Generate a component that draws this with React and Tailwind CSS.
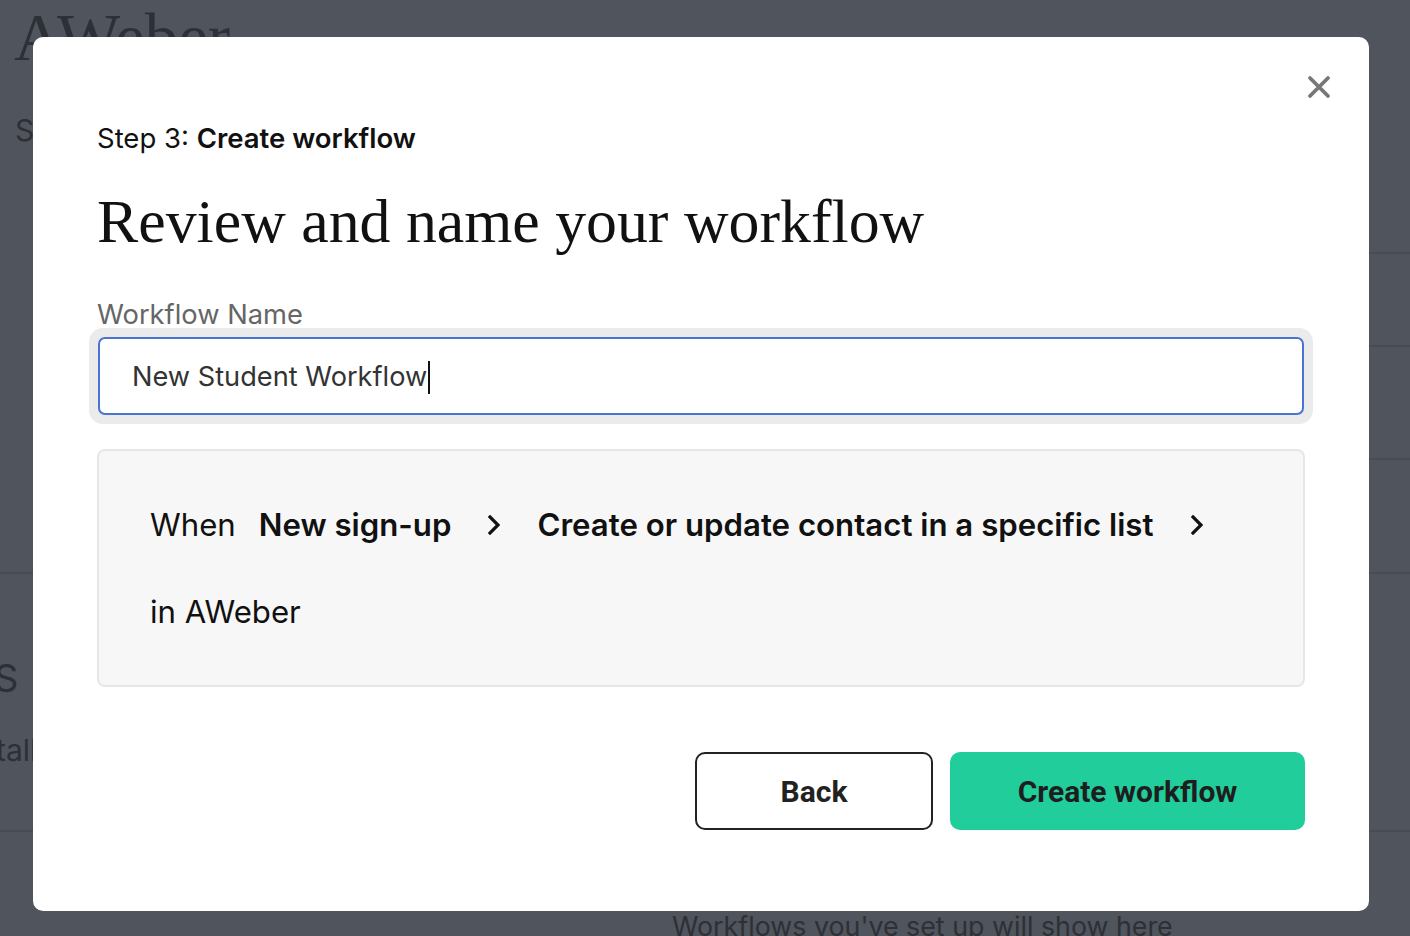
import React from "react";

function Chevron() {
  return (
    <svg width="12" height="20" viewBox="0 0 12 20" className="shrink-0" aria-hidden="true">
      <path d="M2 2 L10 10 L2 18" fill="none" stroke="#111" strokeWidth="3.2" strokeLinecap="square" strokeLinejoin="miter" />
    </svg>
  );
}

function CloseIcon() {
  return (
    <svg width="24" height="24" viewBox="0 0 24 24" aria-hidden="true">
      <path d="M3 3 L21 21 M21 3 L3 21" fill="none" stroke="#777" strokeWidth="3.8" strokeLinecap="round" />
    </svg>
  );
}

export default function App() {
  const sans = { fontFamily: "Inter, 'Noto Sans', sans-serif" };
  return (
    <div className="relative h-[936px] w-[1410px] overflow-hidden bg-[#50545c]" style={sans}>
      {/* Background page (dimmed) */}
      <div className="flex flex-col text-[#2d3036]">
        <div className="h-[100px] pl-[14px] pt-[4px]">
          <span className="text-[67px] leading-none" style={{ fontFamily: "'Liberation Serif', serif" }}>AWeber</span>
        </div>
        <div className="h-[152px] pl-[15px] pt-[12px]">
          <span className="text-[30px] leading-[36px]">S</span>
        </div>
        <div className="ml-[1369px] h-[93px] border-t-2 border-[#474b52]"></div>
        <div className="ml-[1369px] h-[113px] border-t-2 border-[#474b52]"></div>
        <div className="ml-[1369px] h-[114px] border-t-2 border-[#474b52]"></div>
        <div className="h-[258px] border-t-2 border-[#474b52]">
          <div className="-ml-[6px] mt-[82px] text-[38px] leading-[44px]">S</div>
          <div className="-ml-[4px] mt-[32px] text-[30px] leading-[36px]">tall</div>
        </div>
        <div className="h-[106px] border-t-2 border-[#474b52] pl-[672px] pt-[78px]">
          <span className="whitespace-nowrap text-[26.8px] leading-[32px]">Workflows you've set up will show here</span>
        </div>
      </div>

      {/* Modal */}
      <div className="absolute left-[33px] top-[37px] w-[1336px] h-[874px] rounded-[10px] bg-white">
        <button className="absolute left-[1274px] top-[38px] flex h-[24px] w-[24px] items-center justify-center" aria-label="Close">
          <CloseIcon />
        </button>
        <div className="flex flex-col px-[64px] pt-[85px]">
          <div className="h-[32px] text-[27.5px] leading-[32px] text-[#111]">
            Step 3: <span className="font-semibold">Create workflow</span>
          </div>
          <h1 className="mt-[36px] h-[62px] whitespace-nowrap text-[61.8px] leading-[62px] text-[#111]" style={{ fontFamily: "'Liberation Serif', serif" }}>
            Review and name your workflow
          </h1>
          <label className="mt-[49px] h-[27px] text-[27.3px] leading-[27px] text-[#666]">Workflow Name</label>
          <div className="-mx-[8px] rounded-[14px] bg-[#ebebeb] p-[9px]">
            <div className="flex h-[78px] items-center rounded-[7px] border-2 border-[#4a74d2] bg-white pl-[32px] pt-[3px] text-[27.2px] text-[#333]">
              <span>New Student Workflow</span>
              <span className="ml-[1px] inline-block h-[33px] w-[2px] bg-[#111]"></span>
            </div>
          </div>
          <div className="mt-[25px] h-[238px] rounded-[8px] border-2 border-[#e6e6e6] bg-[#f7f7f7] pl-[51px] pr-[20px] pt-[50px]">
            <div className="flex flex-wrap items-center gap-y-[39px] text-[31.2px] leading-[48px] text-[#111]">
              <span className="mr-[23px]">When</span>
              <span className="font-semibold">New sign-up</span>
              <span className="mx-[37px] flex h-[48px] items-center"><Chevron /></span>
              <span className="font-semibold">Create or update contact in a specific list</span>
              <span className="ml-[38px] mr-[40px] flex h-[48px] items-center"><Chevron /></span>
              <span>in AWeber</span>
            </div>
          </div>
          <div className="mt-[65px] flex justify-end gap-[17px]" style={{ fontFamily: "Roboto, 'Noto Sans', sans-serif" }}>
            <button className="flex h-[78px] w-[238px] items-center justify-center rounded-[10px] border-2 border-[#222] bg-white text-[30px] font-bold text-[#222]">
              Back
            </button>
            <button className="flex h-[78px] w-[355px] items-center justify-center rounded-[10px] bg-[#22cd9c] text-[30px] font-bold text-[#1e1e1e]">
              Create workflow
            </button>
          </div>
        </div>
      </div>
    </div>
  );
}
